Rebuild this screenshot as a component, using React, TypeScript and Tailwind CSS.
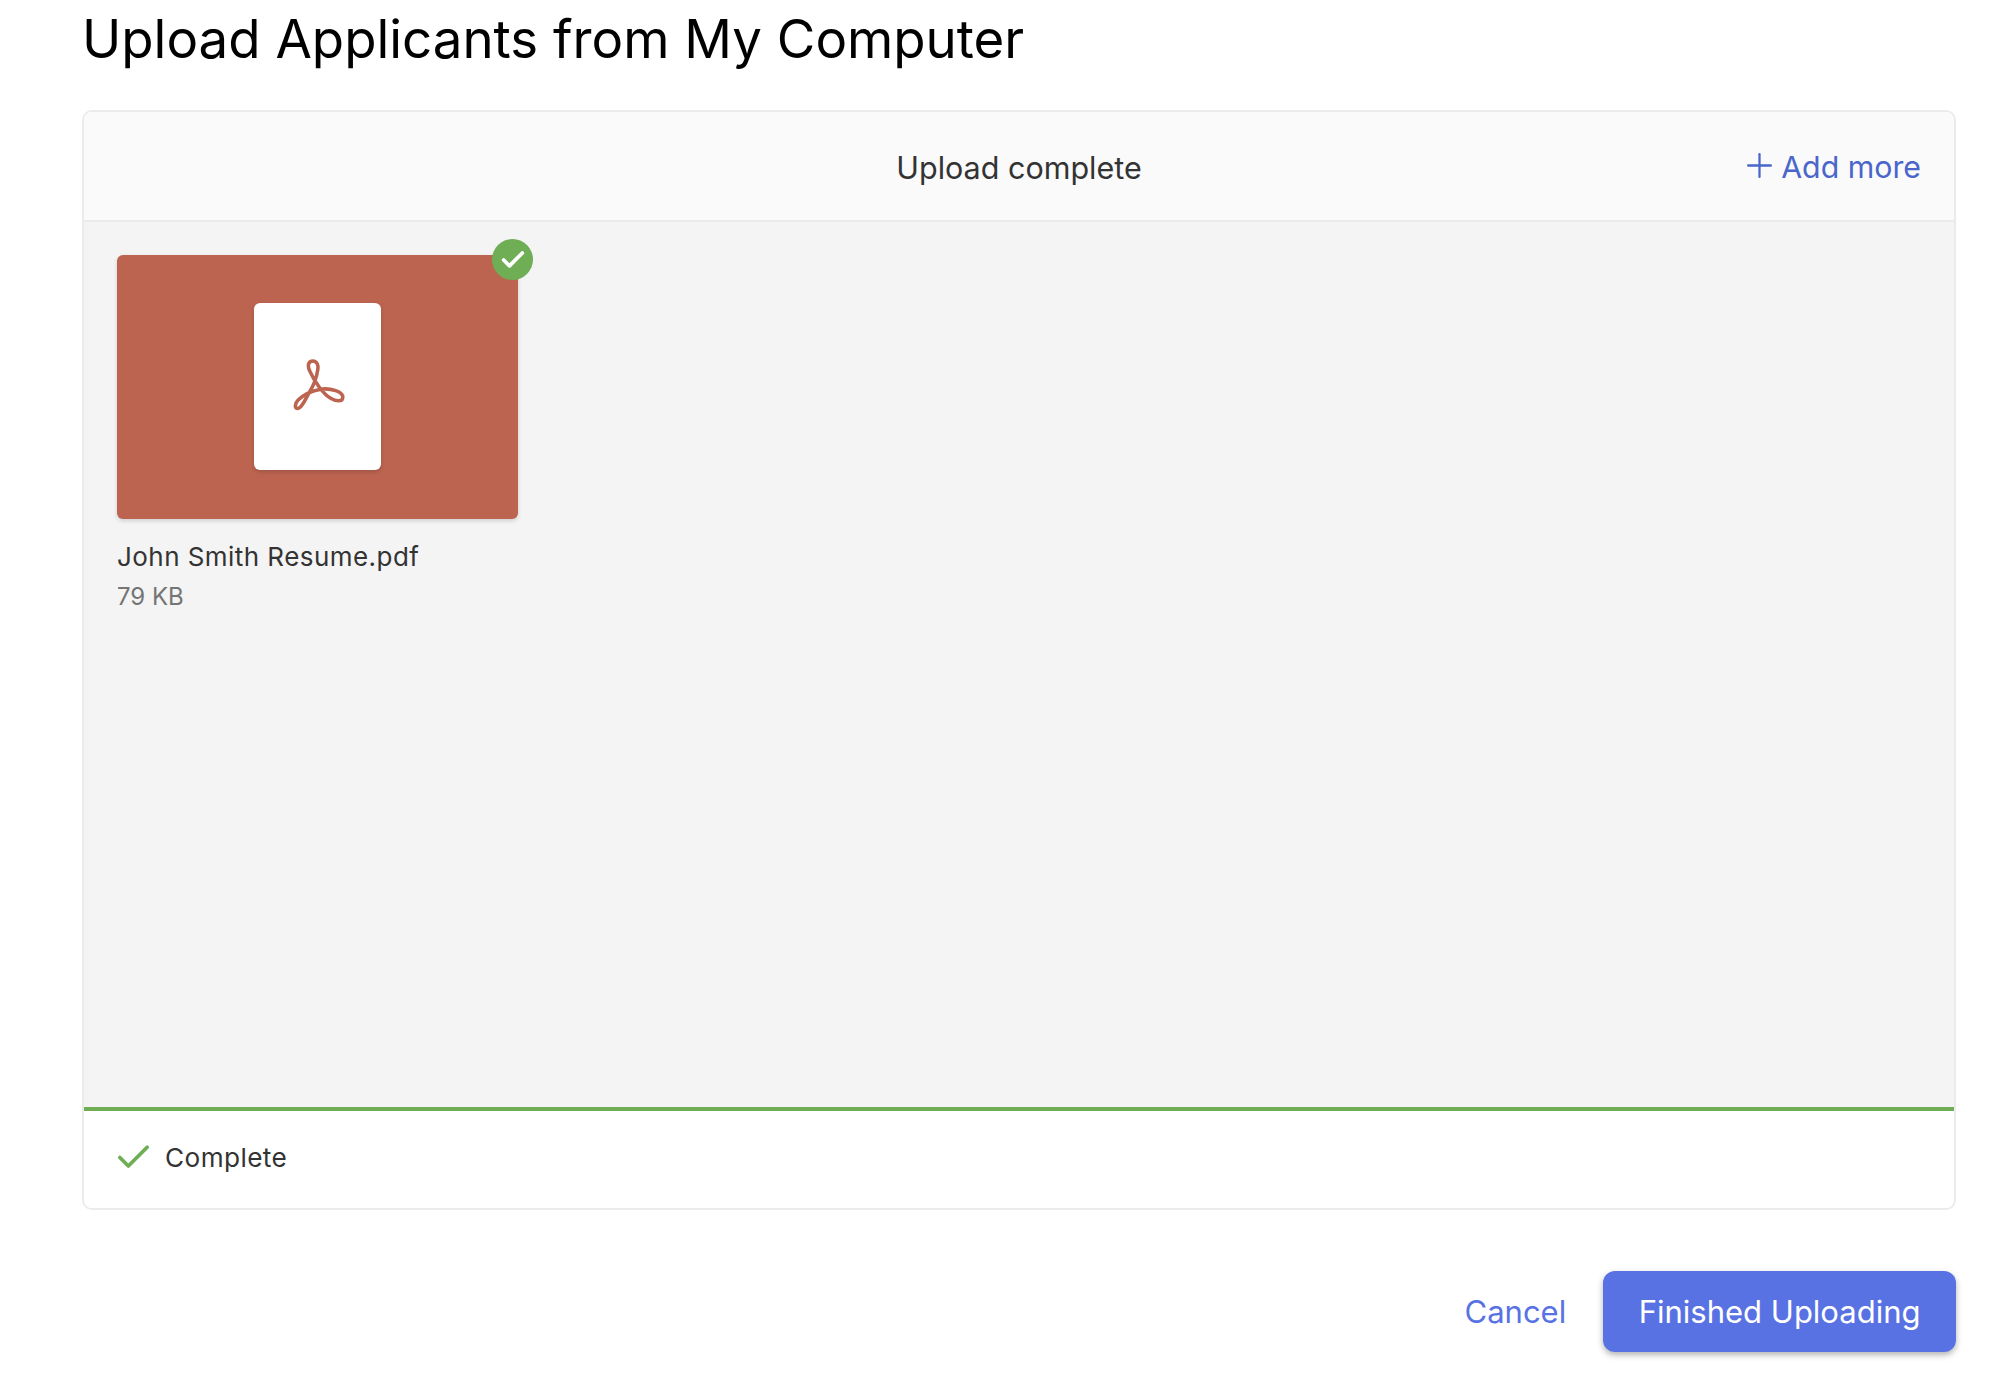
import { Check, Plus } from "lucide-react";

function AcrobatMark() {
  return (
    <svg viewBox="188 58 162 162" className="h-[52px] w-[52px]" fill="none" stroke="#bc6450" strokeWidth="11">
      <path d="M250 64 C262 64 268 76 265 92 C262 112 252 140 240 160 C228 180 215 212 203 212 C193 212 192 198 204 186 C216 174 240 158 275 152 C305 148 345 160 343 178 C342 192 322 190 305 180 C285 170 255 130 240 95 C232 78 236 64 250 64 Z" />
    </svg>
  );
}

function FileCard() {
  return (
    <div className="w-[401px]">
      <div className="relative">
        <div className="flex h-[264px] items-center justify-center rounded-[6px] bg-[#bc6450] pb-[2px] shadow-[0_2px_4px_rgba(0,0,0,0.15)]">
          <div className="flex h-[167px] w-[127px] items-center justify-center rounded-[6px] bg-white pb-[2px] pl-[3px] shadow-[0_2px_4px_rgba(0,0,0,0.15)]">
            <AcrobatMark />
          </div>
        </div>
        <div className="absolute right-[-15px] top-[-16px] flex h-[41px] w-[41px] items-center justify-center rounded-full bg-[#6fae55]">
          <Check size={28} strokeWidth={3.2} className="text-white" />
        </div>
      </div>
      <p className="mt-[20px] text-[26px] leading-[36px] tracking-[0.45px] text-[#333333]">John Smith Resume.pdf</p>
      <p className="mt-[7px] text-[24px] leading-[30px] text-[#757575]">79 KB</p>
    </div>
  );
}

export default function App() {
  return (
    <div className="h-[1376px] overflow-hidden bg-white pl-[82px] pr-[38px] pt-[8px] font-['Inter',sans-serif]">
      <h1 className="text-[52.8px] leading-[62px] text-black">Upload Applicants from My Computer</h1>

      <div className="mt-[40px] overflow-hidden rounded-[10px] border-2 border-[#ebebeb]">
        <div className="relative flex h-[110px] items-center justify-center border-b-2 border-[#ebebeb] bg-[#fafafa] pt-[4px]">
          <span className="text-[30.5px] text-[#333333]">Upload complete</span>
          <button type="button" className="absolute right-[33px] top-[32px] flex items-center gap-[2px] text-[30.3px] leading-[46px] text-[#4a66cb]">
            <Plus size={39} strokeWidth={1.4} className="mb-[4px]" />
            Add more
          </button>
        </div>
        <div className="h-[885px] bg-[#f4f4f4] px-[33px] pt-[33px]">
          <FileCard />
        </div>
        <div className="h-[4px] bg-[#6fae55]" />
        <div className="flex h-[97px] items-center gap-[12px] bg-white pb-[4px] pl-[28px]">
          <Check size={41} strokeWidth={2.2} className="ml-[1px] text-[#6fae55]" />
          <span className="-ml-[1px] text-[26.2px] tracking-[0.4px] text-[#333333]">Complete</span>
        </div>
      </div>

      <div className="mt-[61px] flex items-center justify-end gap-[37px]">
        <button type="button" className="pt-[2px] text-[31px] text-[#5872e4]">Cancel</button>
        <button type="button" className="h-[81px] rounded-[12px] bg-[#5872e4] px-[35.5px] pt-[2px] text-[31px] text-white shadow-[0_3px_6px_rgba(0,0,0,0.3)]">
          Finished Uploading
        </button>
      </div>
    </div>
  );
}
